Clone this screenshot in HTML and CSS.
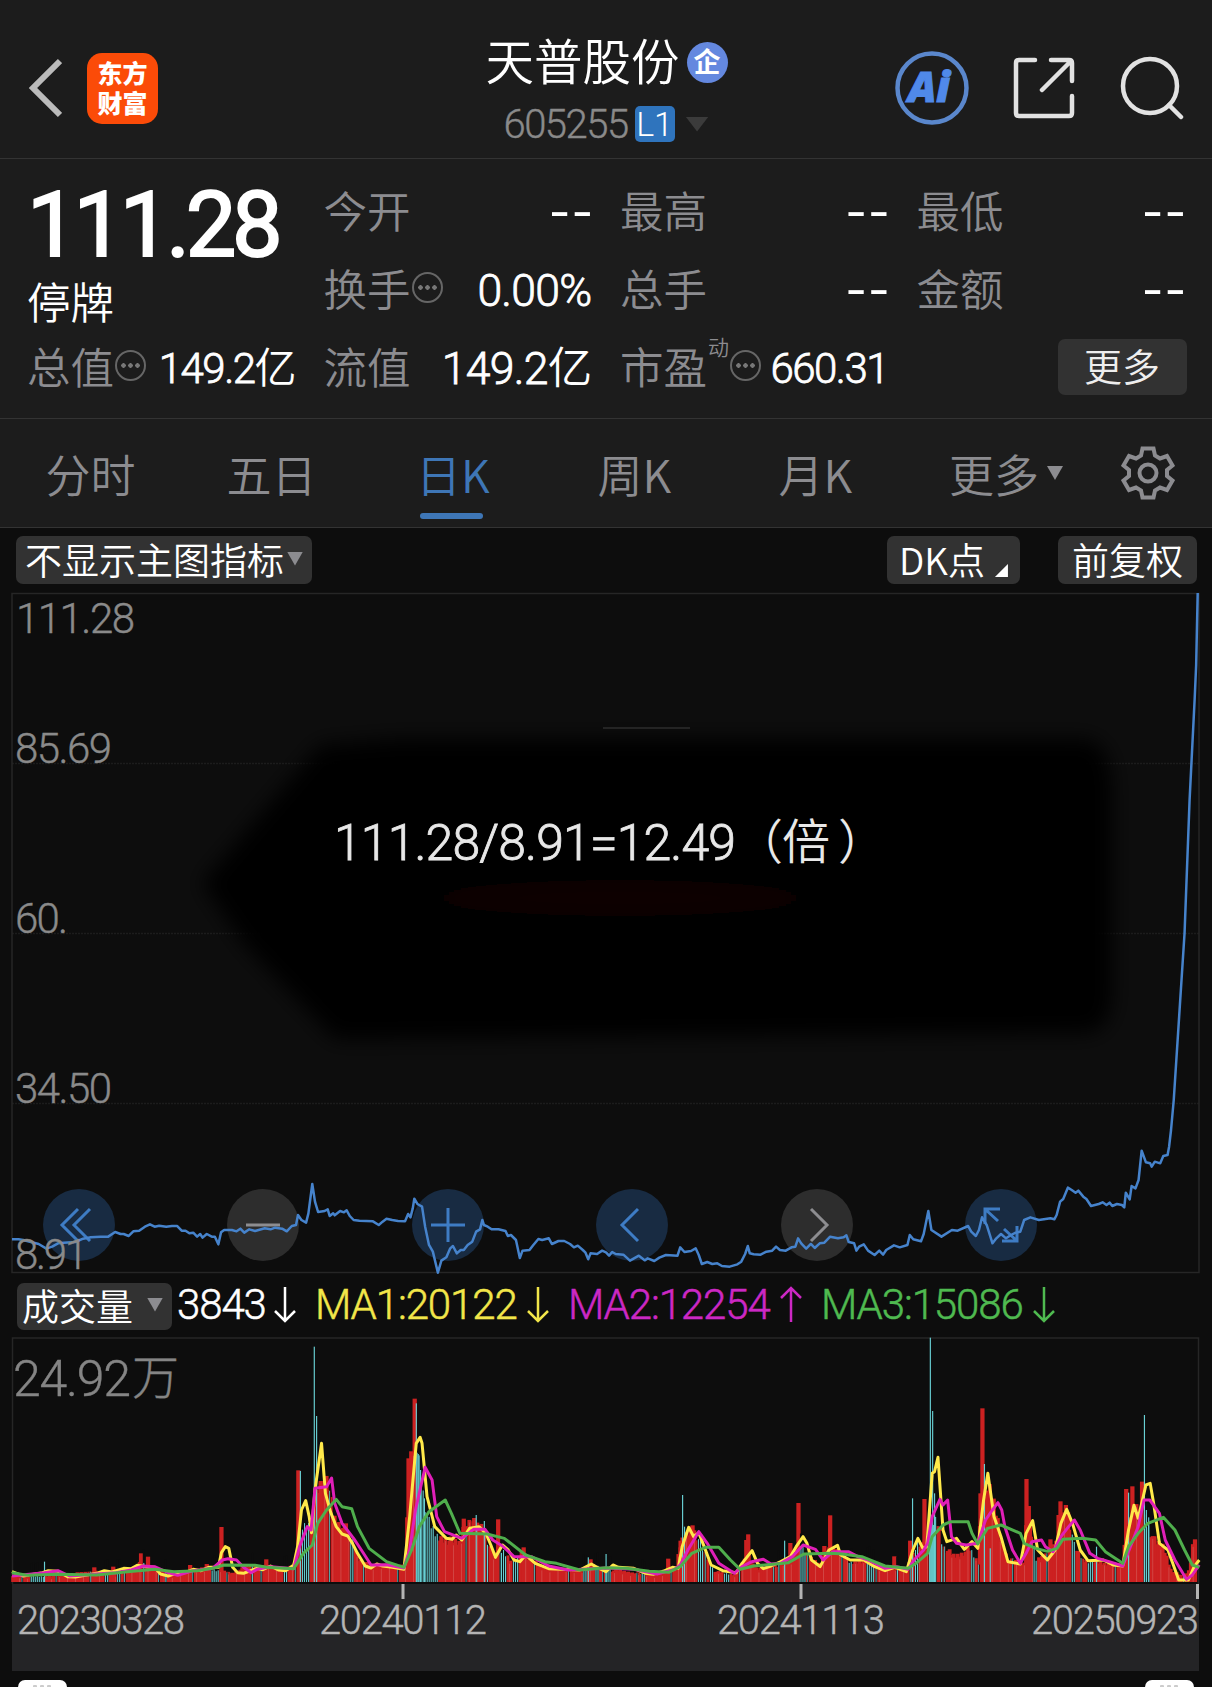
FILE: index.html
```html
<!DOCTYPE html>
<html lang="zh-CN">
<head>
    <meta charset="UTF-8">
    <title>天普股份 605255</title>
    <link rel="stylesheet" href="styles.css">
    <script src="chart.js" defer></script>
</head>
<body>
    <header class="topbar">
      <div class="topbar-left">
        <svg class="back" width="34" height="60" viewBox="0 0 34 60"><path d="M32 3 5 30l27 27" /></svg>
        <div class="logo"><span>东方</span><span>财富</span></div>
      </div>
      <div class="stock">
        <div class="stock-name">天普股份<span class="corp">企</span></div>
        <div class="stock-code"><span class="code">605255</span><span class="level">L1</span><i class="tri tri-dark"></i></div>
      </div>
      <div class="topbar-right">
        <svg width="76" height="76" viewBox="0 0 76 76">
          <circle cx="38" cy="38" r="34.5" fill="none" stroke="#5a87cc" stroke-width="4.5" />
          <text class="ai" x="14" y="52" textLength="42">Ai</text>
        </svg>
        <svg class="line-icon" width="62" height="62" viewBox="0 0 62 62">
          <path d="M22 3H6Q3 3 3 6v50q0 3 3 3h50q3 0 3-3V39M38 3h18q3 0 3 3v18M57 5 29 33" />
        </svg>
        <svg class="line-icon" width="64" height="64" viewBox="0 0 64 64">
          <circle cx="30" cy="30" r="27" /><path d="M49 49l12 12" />
        </svg>
      </div>
    </header>

    <section class="quote">
      <div class="cell cell-price">
        <div class="price">111.28</div>
        <div class="status">停牌</div>
      </div>
      <div class="cell"><span class="label">今开</span><span class="dash">--</span></div>
      <div class="cell"><span class="label">最高</span><span class="dash">--</span></div>
      <div class="cell"><span class="label">最低</span><span class="dash">--</span></div>
      <div class="cell"><span class="label">换手</span><i class="info"></i><span class="value wide">0.00%</span></div>
      <div class="cell"><span class="label">总手</span><span class="dash">--</span></div>
      <div class="cell"><span class="label">金额</span><span class="dash">--</span></div>
      <div class="cell"><span class="label">总值</span><i class="info"></i><span class="value">149.2<b>亿</b></span></div>
      <div class="cell"><span class="label">流值</span><span class="value wide">149.2<b>亿</b></span></div>
      <div class="cell cell-pe"><span class="label">市盈</span><sup>动</sup><i class="info"></i><span class="value">660.31</span></div>
      <div class="cell"><button class="more">更多</button></div>
    </section>

    <nav class="tabs">
      <a>分时</a>
      <a>五日</a>
      <a class="active">日K</a>
      <a>周K</a>
      <a>月K</a>
      <a class="tab-more">更多<i class="tri"></i></a>
      <svg class="gear" width="54" height="54" viewBox="-27 -27 54 54">
        <path d="M-5.500-24.500H5.500L7-17.500 12-14.500 19-17 24.500-7.500 19-3V3L24.500 7.500 19 17 12 14.500 7 17.500 5.500 24.500H-5.500L-7 17.500-12 14.500-19 17-24.500 7.500-19 3V-3L-24.500-7.500-19-17-12-14.500-7-17.500z" />
        <circle r="8.500" />
      </svg>
    </nav>

    <div class="toolbar">
      <button class="chip">不显示主图指标<i class="tri"></i></button>
      <button class="chip chip-dk">DK点<i class="corner"></i></button>
      <button class="chip chip-right">前复权</button>
    </div>

    <div class="main-chart">
      <svg width="1212" height="682" viewBox="0 0 1212 682">
        <defs>
          <filter id="soft" filterUnits="userSpaceOnUse" x="0" y="60" width="1212" height="500"><feGaussianBlur stdDeviation="10" /></filter>
        </defs>
        <path class="grid" d="M12 170.500H1199M12 340.500H1199M12 510.500H1199" />
        <path class="shade" filter="url(#soft)" d="M202 290 320 152 400 146H1085Q1112 149 1112 200V400Q1112 442 1080 440L335 446 245 352z" />
        <ellipse class="glow" filter="url(#soft)" cx="620" cy="305" rx="190" ry="18" />
        <path class="scratch" d="M603 135H690" />
        <rect class="frame" x="12" y="0.500" width="1187" height="679" />
        <g class="axis">
          <text x="16" y="40" textLength="119">111.28</text>
          <text x="15" y="170" textLength="97">85.69</text>
          <text x="15" y="340" textLength="53">60.</text>
          <text x="15" y="510" textLength="97">34.50</text>
        </g>
        <text class="formula" x="334" y="267" textLength="402">111.28/8.91=12.49</text>
        <text class="formula cjk" x="735 782 838" y="266">（倍）</text>
        <g class="pads">
          <g transform="translate(79 632)"><circle r="36" /><path d="M-1-16-17 0-1 16M11-16-5 0 11 16" /></g>
          <g class="off" transform="translate(263 632)"><circle r="36" /><path d="M-17 0H17" /></g>
          <g transform="translate(448 632)"><circle r="36" /><path d="M-17 0H17M0-17V17" /></g>
          <g transform="translate(632 632)"><circle r="36" /><path d="M6-16-10 0 6 16" /></g>
          <g class="off" transform="translate(817 632)"><circle r="36" /><path d="M-6-16 10 0-6 16" /></g>
          <g transform="translate(1001 632)"><circle r="36" /><path d="M-3-4-15-15M-16-1V-16H-1M3 4 15 15M16 1V16H1" /></g>
        </g>
        <!-- series use 1/3136 of the width and 1/3 px of the height as units -->
        <g transform="scale(.38648 .33333) translate(0 1611)"><polyline id="price-line" /></g>
        <g class="axis"><text x="15" y="676" textLength="73">8.91</text></g>
      </svg>
    </div>

    <div class="volume-bar">
      <button class="chip chip-vol">成交量<i class="tri"></i></button>
      <span class="ma ma-now">3843<svg width="24" height="38"><path d="M12 1V35M2 25 12 35 22 25" /></svg></span>
      <span class="ma ma1">MA1:20122<svg width="24" height="38"><path d="M12 1V35M2 25 12 35 22 25" /></svg></span>
      <span class="ma ma2">MA2:12254<svg width="24" height="38"><path d="M12 36V2M2 12 12 2 22 12" /></svg></span>
      <span class="ma ma3">MA3:15086<svg width="24" height="38"><path d="M12 1V35M2 25 12 35 22 25" /></svg></span>
    </div>

    <div class="volume-chart">
      <svg width="1212" height="247" viewBox="0 0 1212 247">
        <path class="frame" d="M12.500 247V1H1198.500V247" />
        <text class="vol-max" x="13" y="59" textLength="118">24.92</text>
        <text class="vol-max cjk" x="132" y="57">万</text>
        <g transform="scale(.38648 .33333) translate(0 -21)">
          <g id="volume-bars"></g>
          <polyline class="line1" id="ma1-line" />
          <polyline class="line2" id="ma2-line" />
          <polyline class="line3" id="ma3-line" />
        </g>
      </svg>
    </div>

    <div class="dates">
      <svg width="1187" height="87" viewBox="0 0 1187 87">
        <path class="ticks" d="M391 0V15M789 0V15M1185.500 0V15" />
        <text x="5" y="50" textLength="168">20230328</text>
        <text x="307" y="50" textLength="168">20240112</text>
        <text x="705" y="50" textLength="168">20241113</text>
        <text x="1019" y="50" textLength="168">20250923</text>
      </svg>
    </div>

    <footer class="handles"><i></i><i></i></footer>
</body>
</html>
```
FILE: styles.css
```css
:root {
  --bg: #0d0d0d;
  --panel: #1c1c1c;
  --line: #333;
  --chip: #323232;
  --grey: #8c8c90;
  --blue: #3e76b6;
  --cjk: "Noto Sans CJK SC", sans-serif;
  --num: Roboto, "Noto Sans CJK SC", sans-serif;
}

* {
  box-sizing: border-box;
}
body {
  margin: 0;
  width: 1212px;
  height: 1687px;
  overflow: hidden;
  background: var(--bg);
  color: #fff;
  font-family: var(--cjk);
  font-weight: 350;
}
button {
  border: 0;
  padding: 0;
  font: inherit;
  color: #fff;
  background: var(--chip);
}
svg {
  display: block;
}

.tri {
  width: 16px;
  height: 14px;
  background: var(--grey);
  clip-path: polygon(0 0, 100% 0, 50% 100%);
}
.tri-dark {
  width: 23px;
  height: 15px;
  margin-left: 11px;
  background: #3b3b3b;
}

/* header */
.topbar {
  display: grid;
  grid-template-columns: 400px 1fr 400px;
  height: 159px;
  background: var(--panel);
  border-bottom: 1px solid var(--line);
}
.topbar-left {
  display: flex;
  align-items: center;
  gap: 25px;
  padding: 18px 0 0 28px;
}
.back {
  fill: none;
  stroke: #bbb;
  stroke-width: 6;
}
.logo {
  display: flex;
  flex-direction: column;
  justify-content: center;
  width: 71px;
  height: 71px;
  padding-bottom: 3px;
  border-radius: 15px;
  background: #fb4b08;
  font-size: 25px;
  font-weight: 900;
  line-height: 30px;
  text-align: center;
}
.stock {
  display: flex;
  flex-direction: column;
  align-items: center;
  padding-top: 28px;
}
.stock-name {
  display: flex;
  align-items: center;
  gap: 7px;
  height: 64px;
  padding-left: 1px;
  font-size: 48.500px;
  line-height: 58px;
  padding-bottom: 3px;
}
.corp {
  width: 41px;
  height: 41px;
  border-radius: 50%;
  margin-top: 7px;
  background: #6488df;
  font-size: 27px;
  font-weight: 700;
  line-height: 38px;
  text-align: center;
}
.stock-code {
  display: flex;
  align-items: center;
  height: 64px;
  font-family: var(--num);
  font-weight: 300;
}
.code {
  color: #8a8a8a;
  font-size: 40px;
  letter-spacing: -1.500px;
  -webkit-text-stroke: 0.400px currentColor;
}
.level {
  width: 40px;
  height: 36px;
  margin-left: 7px;
  border-radius: 5px;
  background: #2f74bd;
  font-size: 34px;
  line-height: 36px;
  text-align: center;
}
.topbar-right {
  display: flex;
  align-items: center;
  gap: 43px;
  padding: 18px 0 0 82px;
}
.topbar-right svg:last-child {
  margin-left: 2px;
}
.ai {
  fill: #5089e9;
  stroke: #5089e9;
  stroke-width: 1;
  font: italic 900 42px "Noto Sans", sans-serif;
}
.line-icon {
  fill: none;
  stroke: #e2e2e2;
  stroke-width: 4.500;
  stroke-linecap: round;
}

/* quote panel */
.quote {
  display: grid;
  grid-template-columns: 268px 268px 268px 268px;
  grid-template-rows: 78px 78px 78px;
  column-gap: 28.500px;
  height: 260px;
  padding: 13px 0 0 27px;
  background: var(--panel);
  border-bottom: 1px solid var(--line);
}
.cell {
  display: flex;
  align-items: center;
  height: 78px;
}
.cell-price {
  grid-row: span 2;
  flex-direction: column;
  align-items: flex-start;
  height: 156px;
}
.price {
  font-family: var(--num);
  font-size: 90px;
  font-weight: 400;
  line-height: 108px;
  letter-spacing: -4.200px;
  -webkit-text-stroke: 2px currentColor;
}
.status {
  font-size: 43.500px;
  line-height: 42px;
}
.label {
  padding-bottom: 3px;
  color: var(--grey);
  font-size: 43.500px;
}
.value {
  height: 78px;
  margin-left: auto;
  font-family: var(--num);
  font-size: 42px;
  font-weight: 300;
  line-height: 82px;
  letter-spacing: -1.500px;
  -webkit-text-stroke: 0.800px currentColor;
}
.value b {
  font-weight: 350;
  -webkit-text-stroke: 0;
}
.value.wide {
  font-size: 44.500px;
  letter-spacing: -0.700px;
}
.dash {
  margin: -14px -3px 0 auto;
  font-size: 60px;
  letter-spacing: 2px;
}
.info {
  width: 31px;
  height: 31px;
  margin: -3px 0 0 1px;
  border: 2px solid #666;
  border-radius: 50%;
  background:
    radial-gradient(circle at 6.500px 13.500px, #777 2px, transparent 2.500px),
    radial-gradient(circle at 13.500px 13.500px, #777 2px, transparent 2.500px),
    radial-gradient(circle at 20.500px 13.500px, #777 2px, transparent 2.500px);
}
.cell-pe sup {
  align-self: flex-start;
  margin-left: 1px;
  color: var(--grey);
  font-size: 21px;
  line-height: 36px;
}
.more {
  width: 129px;
  height: 56px;
  margin: 0 -2px 0 auto;
  border-radius: 7px;
  color: #eee;
  font-size: 38px;
  line-height: 50px;
  padding-bottom: 4px;
}

/* period tabs */
.tabs {
  display: grid;
  grid-template-columns: 181px 181px 182px 181px 181px 200px 54px;
  align-items: center;
  height: 109px;
  background: var(--panel);
  border-bottom: 1px solid var(--line);
  color: var(--grey);
  font-size: 45px;
  line-height: 107px;
  text-align: center;
}
.tabs .active {
  position: relative;
  color: var(--blue);
}
.tabs .active::after {
  content: "";
  position: absolute;
  left: 58px;
  bottom: 8px;
  width: 63px;
  height: 6px;
  border-radius: 3px;
  background: var(--blue);
}
.tab-more {
  display: flex;
  align-items: center;
  justify-content: center;
  gap: 8px;
}
.gear {
  margin-left: 15px;
  fill: none;
  stroke: var(--grey);
  stroke-width: 4;
}

/* chips */
.toolbar {
  display: flex;
  align-items: flex-start;
  height: 65px;
  padding: 8px 15px 8px 16px;
}
.chip {
  display: flex;
  align-items: center;
  justify-content: center;
  gap: 3px;
  width: 296px;
  height: 48px;
  padding-bottom: 3px;
  border-radius: 7px;
  font-size: 37px;
  line-height: 44px;
}
.chip-dk {
  width: 133px;
  margin-left: auto;
  gap: 10px;
}
.chip-right {
  width: 139px;
  margin-left: 38px;
}
.corner {
  width: 13px;
  height: 13px;
  margin-top: 24px;
  background: #fff;
  clip-path: polygon(100% 0, 100% 100%, 0 100%);
}

/* price chart */
.main-chart {
  height: 680px;
}
.main-chart > svg {
  overflow: visible;
}
.frame,
.grid {
  fill: none;
  stroke: #262626;
  stroke-width: 1.500;
}
.grid {
  stroke: #1c1c1c;
  stroke-dasharray: 2 1;
}
.shade {
  fill: #000;
}
.glow {
  fill: #090200;
}
.scratch {
  stroke: #242424;
  stroke-width: 2;
}
.axis text {
  fill: #8a8a8a;
  stroke: #8a8a8a;
  stroke-width: 0.400;
  font: 300 42px var(--num);
}
.formula {
  fill: #e8e8e8;
  stroke: #e8e8e8;
  stroke-width: 0.800;
  font: 300 50px var(--num);
}
.formula.cjk {
  stroke: none;
  font: 350 48px var(--cjk);
}
.pads circle {
  fill: #182b42;
}
.pads path {
  fill: none;
  stroke: #3e7cc4;
  stroke-width: 3;
}
.pads .off circle {
  fill: #2d2d2d;
}
.pads .off path {
  stroke: #8d8d90;
}
polyline {
  fill: none;
  stroke-width: 3px;
  stroke-linejoin: round;
  vector-effect: non-scaling-stroke;
}
#price-line {
  stroke: #4683cc;
  stroke-width: 2.500px;
}

/* volume */
.volume-bar {
  display: flex;
  align-items: center;
  height: 64px;
  padding: 2px 0 0 17px;
}
.chip-vol {
  width: 155px;
  height: 47px;
  gap: 14px;
  padding-right: 4px;
}
.ma {
  display: flex;
  align-items: center;
  justify-content: space-between;
  font-family: var(--num);
  font-size: 42px;
  font-weight: 300;
  line-height: 46px;
  padding-bottom: 2px;
  letter-spacing: -1.100px;
  -webkit-text-stroke: 0.500px currentColor;
}
.ma svg {
  fill: none;
  stroke: currentColor;
  stroke-width: 2.500;
}
.ma-now {
  width: 120px;
  margin-left: 5px;
}
.ma1,
.ma2,
.ma3 {
  width: 235px;
  margin-left: 18px;
}
.ma1 {
  color: #f2e64a;
}
.ma2 {
  color: #cc28c4;
}
.ma3 {
  color: #4fba50;
}
.vol-max {
  fill: #858585;
  stroke: #858585;
  stroke-width: 0.400;
  font: 300 50px var(--num);
}
.vol-max.cjk {
  font-size: 47px;
}
.up {
  fill: #cc2121;
}
.down {
  fill: #68d0d4;
}
.gap {
  fill: #0d0d0d;
}
.seam {
  fill: #d8706c;
}
.line1 {
  stroke: #ffe94a;
}
.line2 {
  stroke: #e01fb8;
}
.line3 {
  stroke: #4fae4c;
}

.dates {
  width: 1187px;
  height: 87px;
  margin-left: 12px;
  background: #242426;
}
.dates text {
  fill: #b4b4b4;
  stroke: #b4b4b4;
  stroke-width: 0.400;
  font: 300 40px var(--num);
}
.ticks {
  stroke: #b4b4b4;
  stroke-width: 3;
}

.handles {
  display: flex;
  justify-content: space-between;
  height: 16px;
  padding: 9px 18px 0;
}
.handles i {
  width: 49px;
  border-radius: 7px 7px 0 0;
  background: radial-gradient(circle at 17px 7px, #ccc 2px, transparent 2.500px), radial-gradient(circle at 24px 7px, #ccc 2px, transparent 2.500px), radial-gradient(circle at 31px 7px, #ccc 2px, transparent 2.500px), #fff;
}
```
FILE: chart.js
```js
const price = `31,328 48,328 60,330 70,333 100,342 120,356 135,350 150,340 165,338 195,336 215,326 235,322 260,320 280,320 298,306 312,312 320,312 333,318 345,304 360,302 375,290 388,283 400,290 412,287 430,290 445,288 458,288 470,302 480,302 490,310 500,308 510,320 518,312 524,323 535,312 548,320 556,320 565,343 572,307 580,300 600,300 612,304 622,296 632,308 645,298 660,303 685,295 700,298 712,293 730,296 742,304 755,288 766,285 771,255 780,270 792,278 798,250 808,162 815,215 823,246 840,243 848,238 853,258 862,250 866,256 880,243 890,247 897,241 905,258 915,270 930,272 965,274 980,285 990,275 1000,266 1015,270 1030,273 1048,274 1056,252 1062,262 1068,235 1072,206 1080,222 1092,230 1100,290 1110,345 1120,365 1133,428 1142,392 1155,382 1165,355 1172,348 1182,370 1192,360 1200,360 1210,345 1222,335 1232,305 1242,298 1248,270 1252,285 1262,290 1272,298 1290,298 1308,303 1314,318 1322,315 1335,330 1345,384 1352,362 1370,360 1380,345 1393,327 1403,330 1420,325 1428,342 1445,333 1460,333 1475,342 1485,352 1495,347 1508,360 1515,368 1522,388 1528,370 1545,372 1558,362 1568,367
1576,377 1584,366 1593,372 1613,374 1630,392 1653,377 1668,391 1676,385 1693,393 1706,383 1723,375 1753,377 1760,352 1771,366 1788,363 1800,355 1808,375 1816,402 1830,396 1843,402 1856,400 1868,408 1888,410 1908,403 1918,395 1928,372 1935,348 1940,370 1950,373 1968,374 1983,365 1998,362 2008,350 2018,360 2033,362 2048,352 2058,350 2065,325 2073,340 2086,356 2098,342 2108,354 2121,340 2133,338 2148,320 2168,325 2183,322 2190,316 2196,336 2210,340 2216,362 2223,350 2235,343 2246,362 2263,375 2275,362 2285,374 2293,360 2313,346 2328,352 2348,345 2354,315 2363,328 2383,334 2390,312 2402,243 2410,300 2436,320 2463,300 2478,302 2505,288 2513,305 2525,318 2533,300 2541,262 2553,285 2568,340 2578,325 2590,312 2603,325 2616,315 2628,308 2640,305 2650,270 2666,262 2688,270 2718,265 2728,268 2734,255 2743,215 2751,207 2763,173 2773,180 2783,188 2790,182 2803,200 2811,207 2823,228 2843,222 2853,217 2863,225 2871,218 2878,228 2890,222 2903,225 2909,232 2913,188 2923,208 2928,168 2938,175 2946,150 2954,62 2965,97 2976,100 2980,110 2988,95 3002,100 3010,78 3021,75 3025,50 3030,0 3037,-90 3065,-591 3078,-990 3091,-1290 3095,-1395 3099,-1611`;

const ma1 = `31,725 60,738 110,728 125,722 150,724 175,740 195,741 250,730 270,722 290,726 320,715 340,716 355,706 380,710 400,712 415,732 435,738 455,730 480,727 500,718 520,722 540,712 565,712 573,668 583,650 592,655 602,712 615,728 630,730 665,715 680,719 700,708 720,720 740,722 760,705 770,650 780,540 791,512 800,560 806,608 815,480 832,340 842,490 855,545 870,590 885,612 900,618 912,640 925,670 945,708 960,714 975,702 990,708 1015,712 1045,718 1060,560 1077,340 1087,322 1092,340 1105,500 1125,590 1155,625 1170,628 1180,615 1195,630 1215,595 1240,590 1258,612 1270,645 1282,682 1300,645 1315,660 1330,690 1345,695 1360,675 1385,700 1420,716 1500,720 1530,702 1545,712 1568,725
1586,705 1600,712 1640,715 1670,730 1690,733 1720,722 1740,712 1755,715 1765,650 1782,592 1795,620 1808,608 1822,650 1840,705 1870,722 1905,728 1920,700 1946,662 1960,700 1975,716 1995,708 2020,695 2045,680 2060,650 2078,620 2088,640 2100,690 2122,710 2145,660 2167,646 2175,675 2200,690 2235,690 2260,708 2290,722 2315,712 2345,725 2362,660 2375,625 2388,655 2398,650 2412,430 2418,425 2427,382 2440,600 2450,635 2475,625 2495,658 2515,635 2530,655 2545,510 2556,430 2572,560 2590,620 2608,695 2640,702 2655,610 2672,572 2685,660 2710,690 2730,660 2745,580 2760,538 2775,580 2795,660 2815,692 2855,690 2880,705 2905,708 2920,600 2934,526 2945,565 2965,465 2976,460 2985,520 3000,640 3022,660 3050,750 3075,750 3090,710 3103,690`;

const ma2 = `31,738 115,728 150,722 180,738 250,732 300,728 340,720 370,708 400,710 435,728 460,736 500,722 550,715 575,690 590,686 612,690 630,712 650,728 665,718 700,710 760,716 775,650 795,590 805,600 815,475 845,470 858,444 866,520 885,580 915,625 935,660 960,705 1000,704 1045,714 1060,660 1075,540 1100,412 1118,450 1130,560 1150,605 1195,625 1225,598 1255,598 1275,630 1300,648 1330,680 1375,680 1420,708 1470,720 1510,718 1568,714
1640,718 1700,732 1745,718 1760,705 1780,660 1808,605 1830,640 1860,700 1900,730 1920,710 1945,695 1975,688 1995,702 2020,700 2050,680 2078,645 2110,658 2130,690 2155,665 2195,665 2220,680 2250,692 2290,715 2320,710 2350,718 2365,690 2390,660 2400,640 2412,560 2432,508 2440,525 2452,510 2462,620 2475,640 2500,645 2530,640 2550,570 2565,545 2582,518 2592,540 2600,590 2620,660 2640,700 2655,670 2670,635 2695,630 2705,650 2725,665 2745,620 2765,590 2780,570 2795,600 2820,670 2840,685 2870,695 2905,708 2925,650 2945,590 2960,510 2975,510 3000,550 3015,630 3040,690 3070,748 3085,735 3103,705`;

const ma3 = `31,728 70,736 150,733 250,735 330,725 400,718 450,725 510,722 550,715 580,705 660,706 690,712 760,716 785,670 808,645 822,580 845,540 870,508 885,530 910,536 925,590 955,655 1000,695 1045,712 1065,660 1085,590 1110,545 1152,510 1168,550 1190,610 1260,612 1305,625 1360,675 1410,695 1440,700 1500,720 1568,713
1620,715 1680,724 1730,727 1760,710 1790,670 1825,652 1860,652 1890,690 1915,718 1950,708 2040,698 2080,672 2150,670 2180,672 2230,680 2290,708 2350,715 2370,700 2400,670 2412,620 2440,585 2460,575 2505,575 2515,610 2530,642 2555,595 2590,585 2640,610 2650,640 2680,655 2710,664 2735,655 2750,628 2800,625 2835,630 2860,665 2905,700 2920,650 2945,610 2970,580 3010,562 3040,600 3065,660 3085,705 3103,712`;

// general level of the daily volume
const level = `31,738 110,740 180,732 240,725 300,732 340,715 365,700 400,715 440,735 480,725 530,715 560,720 600,730 650,705 700,712 740,720 765,700 780,600 810,590 822,460 850,470 860,560 890,600 915,640 925,685 960,710 1000,700 1020,715 1048,700 1060,430 1075,300 1085,400 1095,490 1110,580 1130,620 1190,640 1200,590 1250,590 1275,680 1300,660 1330,700 1350,670 1400,710 1440,718 1500,722 1530,705 1568,720
1600,722 1650,730 1700,737 1728,720 1750,712 1762,640 1790,590 1805,620 1825,680 1850,725 1900,735 1918,715 1935,670 1945,700 1960,715 2010,705 2050,690 2066,640 2090,680 2120,700 2140,660 2170,660 2200,700 2240,690 2290,720 2345,715 2360,690 2372,640 2400,640 2410,580 2425,570 2440,650 2470,680 2510,660 2530,700 2540,500 2555,480 2565,500 2580,560 2590,640 2610,690 2650,700 2655,560 2668,600 2680,690 2700,680 2735,640 2745,560 2765,550 2780,650 2800,690 2850,700 2905,705 2912,600 2935,540 2960,560 2975,600 2990,640 3010,650 3030,720 3060,740 3078,720 3088,630 3100,625`;

const upSpikes = `244,712 293,710 365,670 383,680 492,705 535,702 573,591 689,688 772,421 830,453 845,480 895,580 1057,385 1066,378 1073,206 1200,566 1227,564 1289,568 1355,652 1528,688 1729,686 1761,632 1792,586 1931,630 1936,613 2045,639 2066,519 2133,648 2148,556 2314,679 2355,632 2392,507 2537,490 2542,235 2553,500 2656,447 2662,528 2718,628 2739,555 2744,514 2758,525 2914,477 2930,469 2955,455 3092,628`;
const downSpikes = `115,695 777,423 813,50 819,258 1077,220 1082,372 1088,420 1098,505 1232,555 1253,573 1522,682 1568,672 1766,495 1771,590 2030,632 2361,505 2407,23 2413,243 2418,490 2547,402 2562,655 2837,650 2920,488 2961,255 2966,540 2972,562`;
const downRuns = `80,115 272,280 302,310 368,376 425,432 545,565 648,655 735,742 782,800 905,918 1077,1135 1258,1264 1295,1312 1328,1342 1508,1520 1542,1550 1568,1580 1660,1672 1805,1818 1838,1845 1874,1890 2013,2020 2070,2086 2195,2206 2240,2262 2320,2324 2366,2378 2405,2422 2434,2440 2510,2522 2672,2684 2772,2780 2815,2828 2961,2975`;

const parse = s => s.trim().split(/\s+/).map(p => p.split(',').map(Number));
const BASE = 756;
const STEP = 5.2;

function levelAt(points, x) {
  const i = Math.max(1, points.findIndex(p => p[0] >= x));
  const [x0, y0] = points[i - 1];
  const [x1, y1] = points[i];
  return y0 + (y1 - y0) * (x - x0) / (x1 - x0);
}

function bar(cls, x, y, w) {
  return `<rect class="${cls}" x="${x.toFixed(1)}" y="${y.toFixed(1)}" width="${w}" height="${(BASE - y).toFixed(1)}"/>`;
}

function drawBars() {
  const points = parse(level);
  const runs = parse(downRuns);
  let reds = '';
  let lines = '';
  let n = 0;
  for (let x = 34; x < 3096; x += STEP) {
    n++;
    const noise = ((n * 7919) % 31) / 31;
    const top = levelAt(points, x);
    const y = BASE - (BASE - top) * (0.88 + 0.25 * noise);
    if (runs.some(r => x >= r[0] && x <= r[1])) {
      lines += bar('gap', x - 2.6, y - 40, 5.2) + bar('down', x - 1.3, y, 2.8);
    } else {
      reds += bar('up', x - 5, y, 10);
      if (n % 4 === 0) {
        lines += bar('seam', x, y + 8 > BASE ? y : y + 8, 1.2);
      }
      if (n % 17 === 5) {
        lines += bar('gap', x, y, 5) + bar('down', x + 1, y, 2);
      }
    }
  }
  parse(upSpikes).forEach(([x, y]) => { reds += bar('up', x - 5.5, y, 11); });
  parse(downSpikes).forEach(([x, y]) => { lines += bar('down', x - 1.3, y, 3); });
  document.getElementById('volume-bars').innerHTML = reds + lines;
}

document.getElementById('price-line').setAttribute('points', price);
document.getElementById('ma1-line').setAttribute('points', ma1);
document.getElementById('ma2-line').setAttribute('points', ma2);
document.getElementById('ma3-line').setAttribute('points', ma3);
drawBars();
```
